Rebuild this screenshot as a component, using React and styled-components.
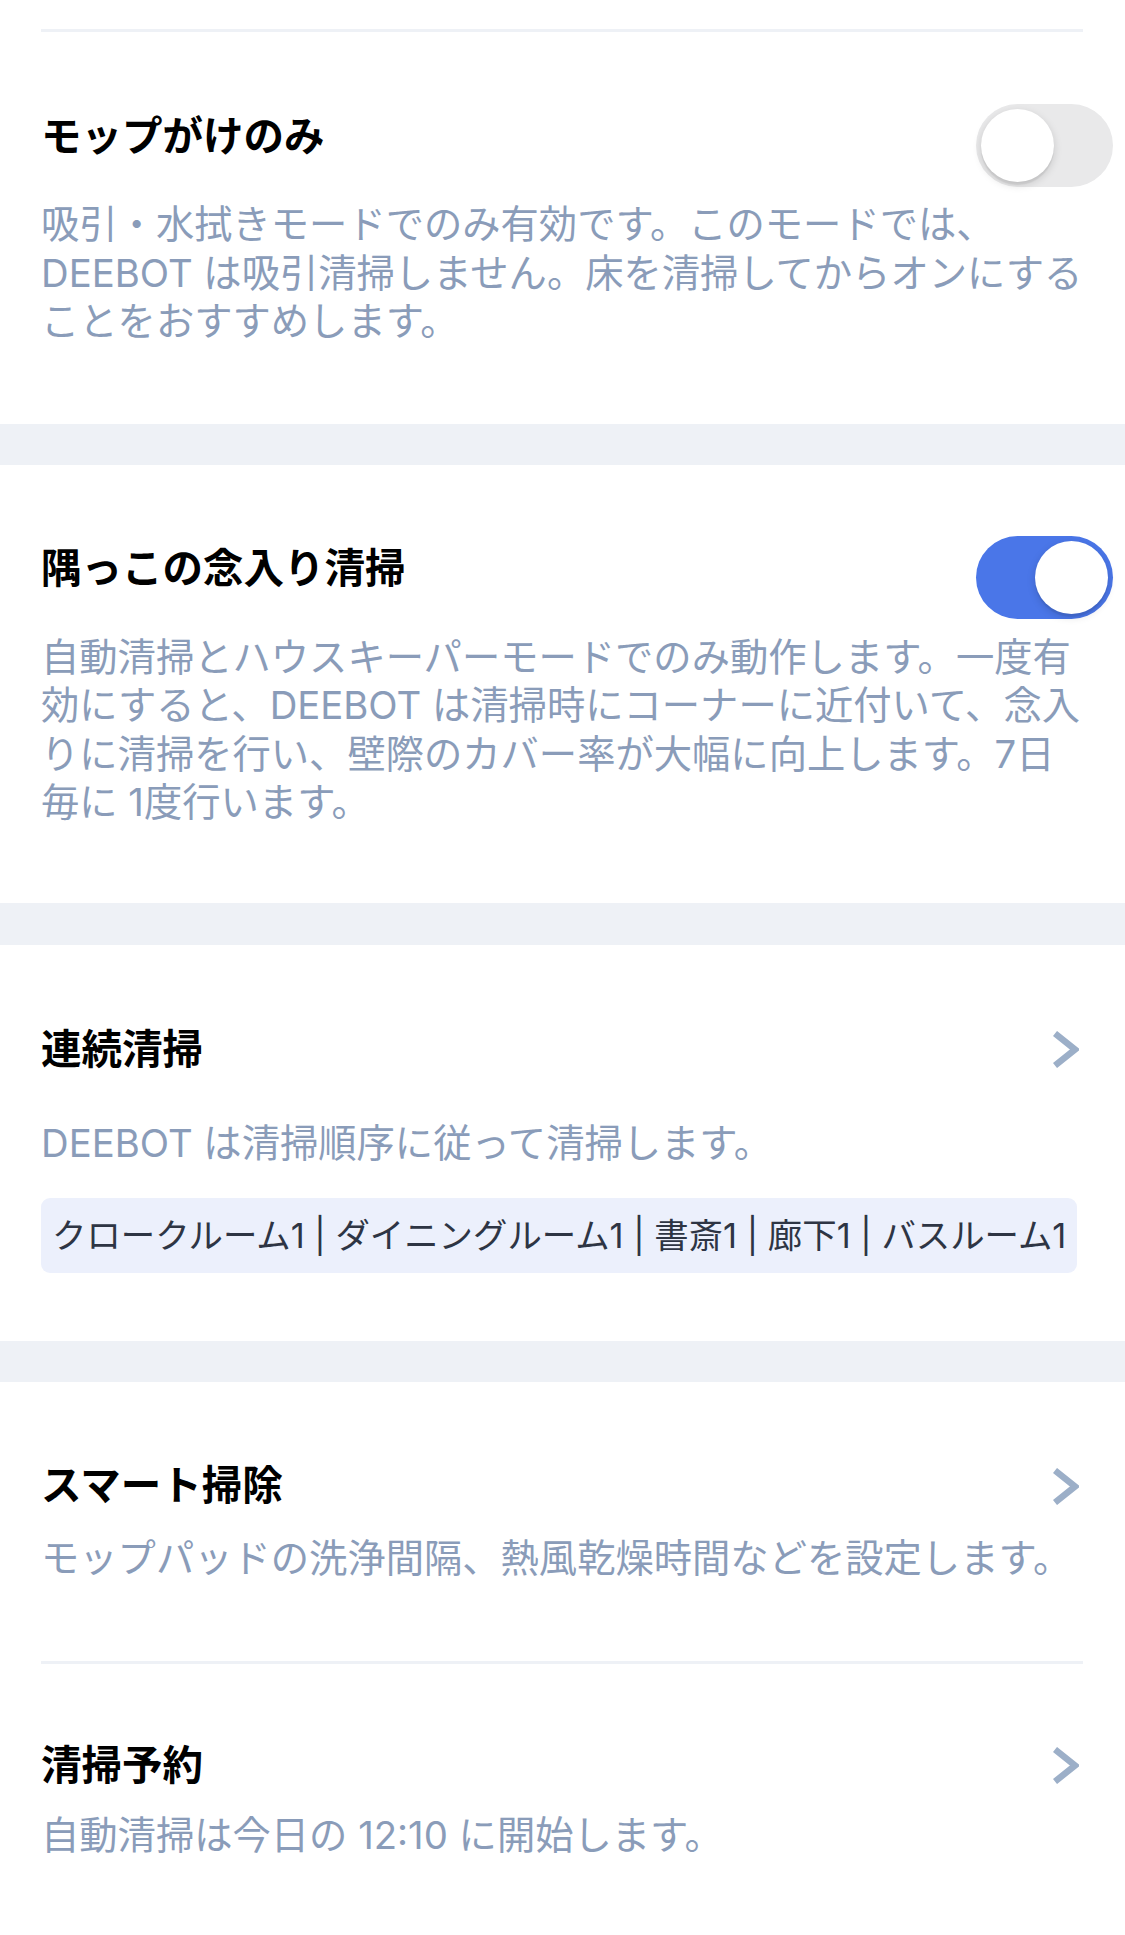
import React from "react";
import styled, { createGlobalStyle } from "styled-components";

const GlobalStyle = createGlobalStyle`
  body {
    margin: 0;
    background: #ffffff;
    font-family: "Inter", "Noto Sans CJK JP", sans-serif;
    -webkit-font-smoothing: antialiased;
  }
`;

const Page = styled.div`
  width: 1125px;
  min-height: 1935px;
  background: #ffffff;
  overflow: hidden;
`;

const Group = styled.div`
  background: #ffffff;
  padding: ${({ $top }) => $top || 0}px 42px 0 41px;
`;

const Band = styled.div`
  height: ${({ $h }) => $h || 41}px;
  background: #eef1f6;
`;

const Divider = styled.div`
  height: 3px;
  background: #eef1f6;
`;

const Item = styled.div`
  padding-top: ${({ $top }) => $top}px;
  padding-bottom: ${({ $bottom }) => $bottom}px;
`;

const HeaderRow = styled.div`
  display: flex;
  justify-content: space-between;
  align-items: flex-start;
`;

const Title = styled.div`
  font-family: "Noto Sans CJK JP", sans-serif;
  font-size: 40.5px;
  font-weight: 700;
  line-height: 60px;
  padding-bottom: 6px;
  color: #000000;
`;

const Desc = styled.div`
  margin-top: ${({ $gap }) => $gap}px;
  font-size: 38.3px;
  line-height: 48.5px;
  color: #8a9cb9;
  white-space: nowrap;
`;

const Tag = styled.div`
  align-self: flex-start;
  display: inline-block;
  margin-top: 31px;
  height: 75px;
  padding: 0 11px;
  border-radius: 9px;
  background: #ecf0fc;
  color: #2e3544;
  font-size: 34.4px;
  line-height: 75px;
  white-space: nowrap;
`;

const Track = styled.div`
  position: relative;
  flex: none;
  width: 137px;
  height: 83px;
  margin-right: -30px;
  border-radius: 42px;
  background: ${({ $on }) => ($on ? "#4a76e8" : "#e9e9ea")};
`;

const Knob = styled.div`
  position: absolute;
  top: 5px;
  left: ${({ $on }) => ($on ? 59 : 5)}px;
  width: 73px;
  height: 73px;
  border-radius: 50%;
  background: #ffffff;
  box-shadow: 0 3px 8px rgba(0, 0, 0, 0.15), 0 3px 1px rgba(0, 0, 0, 0.06);
`;

const ChevronBox = styled.div`
  align-self: center;
  display: flex;
  margin-right: 4px;
`;

const Toggle = ({ on }) => (
  <Track $on={on}>
    <Knob $on={on} />
  </Track>
);

const Chevron = () => (
  <ChevronBox>
    <svg width="26" height="37" viewBox="0 0 26 37">
      <polyline
        points="2,2.5 22,18.5 2,34.5"
        fill="none"
        stroke="#9cafc8"
        strokeWidth="6.5"
        strokeLinejoin="miter"
      />
    </svg>
  </ChevronBox>
);

const Lines = ({ lines, gap }) => (
  <Desc $gap={gap}>
    {lines.map((l, i) => (
      <div key={i}>{l}</div>
    ))}
  </Desc>
);

const App = () => {
  return (
    <Page>
      <GlobalStyle />
      <Group $top={29}>
        <Divider />
        <Item $top={72} $bottom={78}>
          <HeaderRow>
            <Title>モップがけのみ</Title>
            <Toggle on={false} />
          </HeaderRow>
          <Lines
            gap={13}
            lines={[
              "吸引・水拭きモードでのみ有効です。このモードでは、",
              "DEEBOT は吸引清掃しません。床を清掃してからオンにする",
              "ことをおすすめします。",
            ]}
          />
        </Item>
      </Group>
      <Band $h={41} />
      <Group>
        <Item $top={71} $bottom={76}>
          <HeaderRow>
            <Title>隅っこの念入り清掃</Title>
            <Toggle on />
          </HeaderRow>
          <Lines
            gap={14}
            lines={[
              "自動清掃とハウスキーパーモードでのみ動作します。一度有",
              "効にすると、DEEBOT は清掃時にコーナーに近付いて、念入",
              "りに清掃を行い、壁際のカバー率が大幅に向上します。7日",
              "毎に 1度行います。",
            ]}
          />
        </Item>
      </Group>
      <Band $h={42} />
      <Group>
        <Item $top={72} $bottom={68}>
          <HeaderRow>
            <Title>連続清掃</Title>
            <Chevron />
          </HeaderRow>
          <Lines gap={36} lines={["DEEBOT は清掃順序に従って清掃します。"]} />
          <Tag>クロークルーム1 | ダイニングルーム1 | 書斎1 | 廊下1 | バスルーム1</Tag>
        </Item>
      </Group>
      <Band $h={41} />
      <Group>
        <Item $top={71} $bottom={78}>
          <HeaderRow>
            <Title>スマート掃除</Title>
            <Chevron />
          </HeaderRow>
          <Lines gap={15} lines={["モップパッドの洗浄間隔、熱風乾燥時間などを設定します。"]} />
        </Item>
        <Divider />
        <Item $top={69} $bottom={80}>
          <HeaderRow>
            <Title>清掃予約</Title>
            <Chevron />
          </HeaderRow>
          <Lines gap={12} lines={["自動清掃は今日の 12:10 に開始します。"]} />
        </Item>
      </Group>
    </Page>
  );
};

export default App;
